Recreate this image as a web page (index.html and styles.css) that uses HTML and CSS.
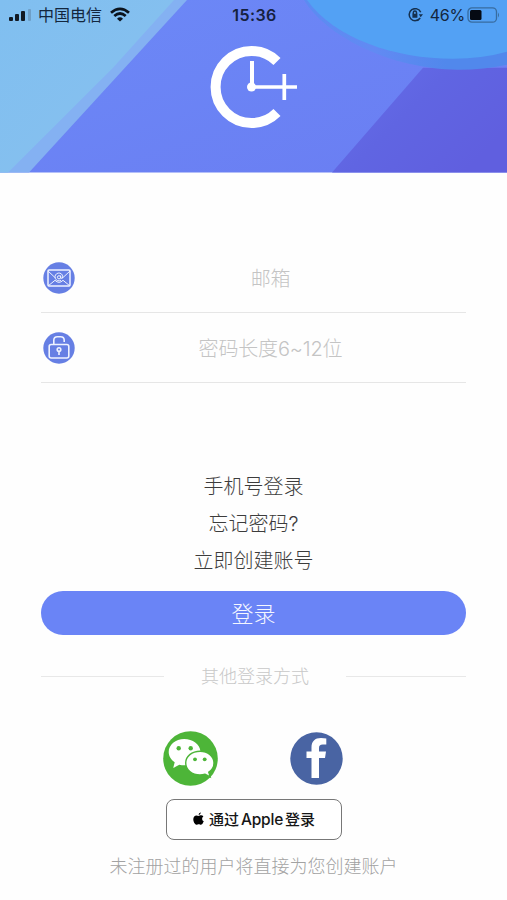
FILE: index.html
```html
<!DOCTYPE html>
<html lang="zh-CN">
<head>
<meta charset="utf-8">
<title>登录</title>
<link rel="stylesheet" href="styles.css">
</head>
<body>
<header class="hero">
  <svg class="hero-art" viewBox="0 0 507 173" preserveAspectRatio="none" aria-hidden="true">
    <defs>
      <linearGradient id="base" x1="0" y1="0" x2="1" y2="1"><stop offset="0" stop-color="#6c89f7"/><stop offset="1" stop-color="#6a7df2"/></linearGradient>
      <linearGradient id="deep" x1="0" y1="0" x2="1" y2="0.6"><stop offset="0" stop-color="#6670ea"/><stop offset="0.5" stop-color="#6065e2"/><stop offset="1" stop-color="#605fdf"/></linearGradient>
      <linearGradient id="sky" x1="0" y1="0" x2="1" y2="1"><stop offset="0" stop-color="#80bff0"/><stop offset="1" stop-color="#88c0ee"/></linearGradient>
      <linearGradient id="rim" x1="0" y1="0" x2="1" y2="0"><stop offset="0" stop-color="#5b8bf2"/><stop offset="0.35" stop-color="#628af3"/><stop offset="0.7" stop-color="#5188ec"/><stop offset="1" stop-color="#5188ec"/></linearGradient>
    </defs>
    <rect width="507" height="173" fill="url(#base)"/>
    <path d="M0 0H187L29 173H0Z" fill="#84b1f2"/>
    <path d="M0 0H174L113 68L8 173H0Z" fill="url(#sky)"/>
    <path d="M332 173L423 68H507V173Z" fill="url(#deep)"/>
    <path d="M304 0C326 36 389 69 458 70Q484 70 507 65V0Z" fill="url(#rim)"/>
    <path d="M307 0C334 38 394 59 453 59Q482 59 507 52V0Z" fill="#53a1f4"/>
  </svg>
  <div class="status">
    <div class="carrier">
      <svg width="23" height="14" viewBox="0 0 23 14"><g fill="#111923"><rect y="9" width="4" height="4" rx="1"/><rect x="6" y="6" width="4" height="7" rx="1"/><rect x="12" y="3" width="4" height="10" rx="1"/></g><rect x="19" y="1" width="3" height="12" rx="1" fill="#6e9fc8"/></svg>
      <span class="carrier-name">中国电信</span>
      <svg class="wifi" width="20" height="15" viewBox="0 0 20 15"><g fill="none" stroke="#0b131d" stroke-width="2.8"><path d="M1 5.7Q10-2 19 5.7"/><path d="M4.3 9Q10 4.1 15.7 9"/></g><path d="M7 11.7Q10 9 13 11.7L10 14.5Z" fill="#0b131d"/></svg>
    </div>
    <span class="time">15:36</span>
    <div class="power">
      <svg width="15" height="14" viewBox="0 0 15 14"><g fill="none" stroke="#15304f" stroke-width="1.5"><path d="M12.7 4.2A6 6 0 1 0 12.2 10"/><path d="M5.3 6V4.7a1.6 1.6 0 0 1 3.2 0V6"/></g><path d="M10.8 6.2H15L12.7 9.2ZM4.4 5.8h5v4h-5z" fill="#15304f"/></svg>
      <span class="percent">46%</span>
      <svg width="33" height="16" viewBox="0 0 33 16"><rect x="1" y=".8" width="28.5" height="14.4" rx="4" fill="none" stroke="#386c9f" stroke-width="1.3"/><rect x="3" y="3" width="11.5" height="10" rx="1.5" fill="#050a13"/><path d="M31 5.5Q33 8 31 10.5Z" fill="#386c9f"/></svg>
    </div>
  </div>
  <svg class="logo" width="90" height="86" viewBox="209 44 90 86" role="img" aria-label="C+"><g fill="none" stroke="#fff"><path d="M277 61.5A36 36 0 1 0 277 112.5" stroke-width="10"/><path d="M252 61V87" stroke-width="4"/><path d="M252 87H297M284.3 74V100" stroke-width="3.7"/></g><circle cx="251.5" cy="87" r="4.5" fill="#fff"/></svg>
</header>
<main>
  <label class="field">
    <svg width="32" height="32" viewBox="0 0 32 32"><circle cx="16" cy="16" r="15.7" fill="#667fe4"/><g fill="none" stroke="#eef2ff" stroke-width="1.5"><rect x="5" y="8" width="22" height="16" rx="1"/><path d="M5 9L12.5 16M27 9L19.5 16M5 24L12 18.3Q16 22.4 20 18.3L27 24" stroke-width="1"/><circle cx="16" cy="15.3" r="1.6" stroke-width="1"/><path d="M17.7 13.4v2.7q1.9 1 2.1-1.2a3.9 3.9 0 1 0-1.8 3.3" stroke-width="1"/></g></svg>
    <span>邮箱</span>
  </label>
  <label class="field">
    <svg width="32" height="32" viewBox="0 0 32 32"><circle cx="16" cy="16" r="15.7" fill="#667fe4"/><g fill="none" stroke="#eef2ff" stroke-width="1.6"><rect x="6.2" y="12.5" width="19.6" height="13.5" rx="2"/><path d="M10.8 12.5V8.3Q10.8 4.7 14.4 4.7H17.6Q21.2 4.7 21.2 8.3V10"/><circle cx="16" cy="17.5" r="1.8"/><path d="M16 19.5V23"/></g></svg>
    <span>密码长度6~12位</span>
  </label>
  <nav class="links"><a>手机号登录</a><a>忘记密码?</a><a>立即创建账号</a></nav>
  <button class="submit">登录</button>
  <div class="divider"><span>其他登录方式</span></div>
  <div class="social">
    <svg width="55" height="55" viewBox="0 0 55 55" role="img" aria-label="微信"><circle cx="27.5" cy="27.5" r="27.3" fill="#4db538"/><path d="M21.2 8C12.5 8 5.7 13.7 5.7 21c0 4.3 2.4 7.9 6 10.3L10.2 37l6.1-3.3q3.6 1 8.2.5C34.1 33 38 27.5 37.4 20 36.7 13.2 29.8 8 21.2 8Z" fill="#fff"/><path d="M37.1 20.2C28.8 20.2 22.7 25.4 22.7 32c0 6.9 6.2 12 14.3 12q2.7 0 5.1-.8l5.1 2.7-1.4-4.7c3.1-2.1 5.2-5.3 5.2-9.2 0-6.6-6-11.8-13.9-11.8Z" fill="#fff" stroke="#4db538" stroke-width="1.4"/><g fill="#4db538"><circle cx="15.7" cy="17.2" r="2.2"/><circle cx="27.7" cy="17.2" r="2.2"/><circle cx="32" cy="28.3" r="1.9"/><circle cx="41.7" cy="28.3" r="1.9"/></g></svg>
    <svg width="53" height="53" viewBox="0 0 53 53" role="img" aria-label="Facebook"><circle cx="26.5" cy="26.5" r="26.2" fill="#4964a3"/><path d="M21.5 46V26h-5v-6.5h5V15.5C21.5 9.2 25 6 31 6q3 0 5.3.5v6h-3.5c-2.9 0-3.8 1.2-3.8 3.8v3.2h7l-1 6.5h-6V46Z" fill="#fff"/></svg>
  </div>
  <button class="apple">
    <svg width="11" height="13" viewBox="0 0 11 13" aria-hidden="true"><path d="M7.8.2Q8 2.4 5.6 3.2 5.3 1.1 7.8.2ZM5.5 4C6.4 4 7 3.3 8.1 3.3q1.5 0 2.3 1.2-1.4.9-1.3 2.5.1 1.7 1.7 2.3Q9.5 12.7 8 12.7c-.9 0-1.3-.5-2.3-.5s-1.4.5-2.2.5C1.9 12.7.3 9.8.3 7.3c0-2.4 1.5-3.9 3.1-3.9.8 0 1.5.6 2.1.6Z"/></svg>
    <span>通过<b>Apple</b>登录</span>
  </button>
  <p class="note">未注册过的用户将直接为您创建账户</p>
</main>
</body>
</html>
```
FILE: styles.css
```css
* { box-sizing: border-box; }
body {
  margin: 0;
  height: 900px;
  overflow: hidden;
  background: #fefefe;
  font-family: "Inter", "Noto Sans CJK SC", sans-serif;
  font-weight: 300;
}
svg { display: block; flex: none; }
button { margin: 0; padding: 0; font: inherit; }
.hero { position: relative; height: 172.5px; overflow: hidden; }
.hero-art { position: absolute; inset: 0; width: 100%; height: 100%; }
.status {
  position: relative;
  display: grid;
  grid-template-columns: 1fr auto 1fr;
  align-items: center;
  height: 29px;
  padding: 0 7px 0 9px;
  color: #13263d;
  font-size: 16px;
  line-height: 24px;
}
.carrier, .power { display: flex; align-items: center; }
.carrier-name { margin-left: 6px; font-size: 16px; font-weight: 400; }
.wifi { margin-left: 8px; }
.time { color: #15213f; font-weight: 600; letter-spacing: .4px; }
.power { justify-content: flex-end; }
.percent { margin: 0 2px 0 7px; font-weight: 400; letter-spacing: -.2px; }
.logo { position: relative; margin: 15px 0 0 209px; }
main { padding: 70px 41px 0; }
.field {
  display: grid;
  grid-template-columns: 34px 1fr;
  align-items: center;
  height: 70px;
  border-bottom: 1px solid #e6e6e6;
  color: #c4c4c4;
  font-size: 20px;
  letter-spacing: -.15px;
  text-align: center;
}
.field svg { margin: 2px 0 0 2px; }
.links {
  display: flex;
  flex-direction: column;
  align-items: center;
  margin-top: 86px;
  color: #3c3c3c;
  font-size: 20px;
  line-height: 37px;
}
.submit {
  display: block;
  width: 100%;
  height: 44px;
  margin-top: 11px;
  border: 0;
  border-radius: 22px;
  background: #6a84f6;
  color: #f4f6ff;
  font-size: 22px;
  line-height: 46px;
}
.divider {
  display: grid;
  grid-template-columns: 123px 1fr 120px;
  align-items: center;
  height: 26px;
  margin-top: 29px;
  color: #c8c8c8;
  font-size: 18px;
  line-height: 26px;
  text-align: center;
}
.divider::before, .divider::after { content: ""; height: 1px; background: #e8e8e8; }
.social {
  display: flex;
  align-items: center;
  gap: 72px;
  margin: 41px 0 0 122px;
}
.apple {
  display: flex;
  align-items: center;
  justify-content: center;
  gap: 5px;
  width: 176px;
  height: 41px;
  margin: 13px 0 0 125px;
  padding-bottom: 2px;
  border: 1px solid #777;
  border-radius: 8px;
  background: #fff;
  color: #161616;
  font-size: 15px;
  font-weight: 500;
}
.apple b { margin: 0 2px; font-weight: 500; font-size: 15.5px; letter-spacing: -.2px; }
.note {
  margin: 14px 0 0;
  color: #a2a2a2;
  font-size: 18px;
  line-height: 26px;
  text-align: center;
  white-space: nowrap;
}
```
